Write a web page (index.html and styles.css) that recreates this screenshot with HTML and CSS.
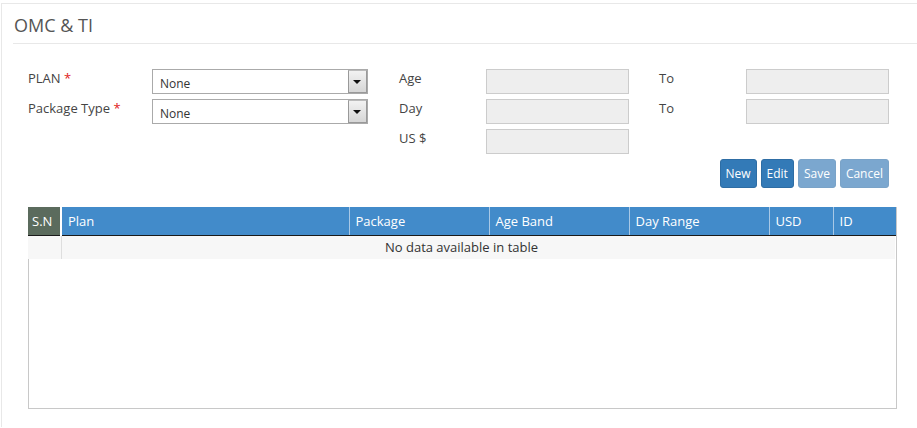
FILE: index.html
```html
<!DOCTYPE html>
<html>
<head>
<meta charset="utf-8">
<link rel="stylesheet" href="styles.css">
</head>
<body>
<div class="panel">
  <div class="title">OMC &amp; TI</div>
  <div class="form">
    <label class="lbl">PLAN <span class="req">*</span></label>
    <div class="select"><span>None</span><span class="arrow"></span></div>
    <span></span>
    <label class="lbl">Age</label>
    <div class="input"></div>
    <span></span>
    <label class="lbl">To</label>
    <div class="input"></div>

    <label class="lbl">Package Type <span class="req">*</span></label>
    <div class="select"><span>None</span><span class="arrow"></span></div>
    <span></span>
    <label class="lbl">Day</label>
    <div class="input"></div>
    <span></span>
    <label class="lbl">To</label>
    <div class="input"></div>

    <span></span><span></span><span></span>
    <label class="lbl">US $</label>
    <div class="input"></div>
  </div>
  <div class="actions">
    <button class="btn">New</button>
    <button class="btn">Edit</button>
    <button class="btn disabled">Save</button>
    <button class="btn disabled">Cancel</button>
  </div>
  <div class="tablebox">
    <table>
      <thead>
        <tr>
          <th class="sn">S.N</th>
          <th class="c-plan">Plan</th>
          <th class="c-mid">Package</th>
          <th class="c-mid">Age Band</th>
          <th class="c-mid">Day Range</th>
          <th class="c-sm">USD</th>
          <th>ID</th>
        </tr>
      </thead>
      <tbody>
        <tr><td class="empty" colspan="7">No data available in table</td></tr>
      </tbody>
    </table>
  </div>
</div>
</body>
</html>
```
FILE: styles.css
```css
html, body {
  margin: 0;
  padding: 0;
  background: #fff;
  font-family: "Open Sans", "Liberation Sans", sans-serif;
  color: #444;
}
.panel {
  margin: 3px 0 0 1px;
  border-top: 1px solid #e8e8e8;
  border-left: 1px solid #e8e8e8;
  height: 424px;
  box-sizing: border-box;
}
.title {
  margin-left: 11px;
  height: 39px;
  border-bottom: 1px solid #e8e8e8;
  font-size: 18px;
  line-height: 42px;
  color: #555;
  padding-left: 1px;
}
.form {
  display: grid;
  grid-template-columns: 124px 216px 31px 87px 143px 30px 87px 143px;
  grid-auto-rows: 25px;
  row-gap: 5px;
  margin: 25px 0 0 26px;
}
.lbl {
  font-size: 13px;
  line-height: 18px;
  color: #444;
}
.req { color: #e02020; }
.select {
  border: 1px solid #aaa;
  background: #fff;
  box-sizing: border-box;
  display: flex;
  align-items: center;
  justify-content: space-between;
  font-size: 12px;
  color: #333;
  padding-left: 7px;
  padding-top: 4px;
  position: relative;
}
.select .arrow {
  position: absolute;
  right: 0;
  top: 0;
  width: 19px;
  height: 23px;
  box-sizing: border-box;
  border: 1px solid #999;
  border-top-color: #bbb;
  background: linear-gradient(#f2f2f2, #d6d6d6);
}
.select .arrow::after {
  content: "";
  position: absolute;
  left: 4px;
  top: 9px;
  border-left: 4px solid transparent;
  border-right: 4px solid transparent;
  border-top: 4px solid #111;
}
.input {
  border: 1px solid #ccc;
  background: #eee;
  box-sizing: border-box;
}
.actions {
  display: flex;
  justify-content: flex-end;
  gap: 4px;
  margin: 5px 28px 0 0;
}
.btn {
  font-family: "Open Sans", "Liberation Sans", sans-serif;
  font-size: 12px;
  color: #fff;
  background: #337ab7;
  border: 1px solid #2e6da4;
  border-radius: 3px;
  height: 29px;
  padding: 0 5px;
  line-height: 27px;
}
.btn.disabled {
  background: #7ba7cf;
  border-color: #7aa3c8;
}
.tablebox {
  margin: 19px 20px 0 26px;
  height: 202px;
  border: 1px solid #c8c8c8;
  border-top: none;
  box-sizing: border-box;
}
table {
  border-collapse: collapse;
  width: 868px;
  margin-left: -1px;
  table-layout: fixed;
}
th {
  background: #428bca;
  color: #fff;
  font-weight: normal;
  font-size: 13px;
  text-align: left;
  height: 28px;
  padding: 0 0 0 6px;
  border-left: 1px solid #a8c8e6;
  border-bottom: 1px solid #1a1a1a;
  box-sizing: border-box;
}
th.sn {
  background: #5b6b5d;
  width: 33px;
  border-left: none;
  padding-left: 4px;
  border-right: 2px solid #fff;
}
th.c-plan { width: 288px; }
th.c-mid { width: 140px; }
th.c-sm { width: 64px; }
td.empty {
  height: 23px;
  padding: 0;
  text-align: center;
  font-size: 13px;
  color: #333;
  background: linear-gradient(to right, transparent 33px, #dedede 33px, #dedede 34px, transparent 34px), #f7f7f7;
  border-right: 1px solid #fff;
}
```
